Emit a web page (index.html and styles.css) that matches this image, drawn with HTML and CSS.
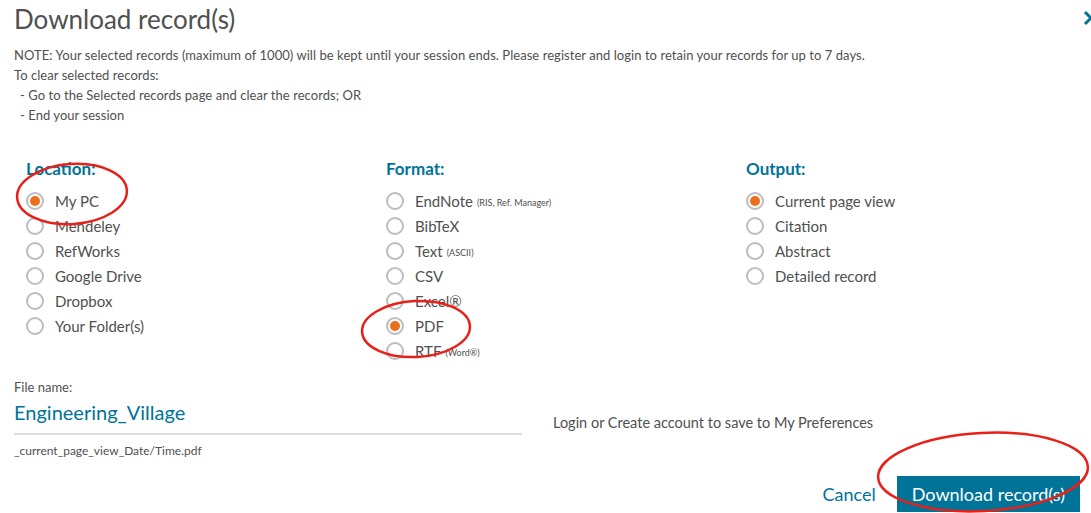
FILE: index.html
```html
<!DOCTYPE html>
<html lang="en">
<head>
    <meta charset="UTF-8">
    <title>Download record(s)</title>
    <link rel="stylesheet" href="styles.css">
</head>
<body>
    <div class="dialog">
        <div class="dialog-header">
            <h1>Download record(s)</h1>
            <button class="close" aria-label="Close">
                <svg width="12" height="16" viewBox="0 0 12 16"><polyline points="2,2 8,8 2,14" fill="none" stroke="#007398" stroke-width="3"/></svg>
            </button>
        </div>
        <div class="note">
            <p>NOTE: Your selected records (maximum of 1000) will be kept until your session ends. Please register and login to retain your records for up to 7 days.</p>
            <p>To clear selected records:</p>
            <p class="indent">- Go to the Selected records page and clear the records; OR</p>
            <p class="indent">- End your session</p>
        </div>

        <div class="options">
            <div class="option-group">
                <h2>Location:</h2>
                <label class="radio checked"><span class="dot"></span>My PC</label>
                <label class="radio"><span class="dot"></span>Mendeley</label>
                <label class="radio"><span class="dot"></span>RefWorks</label>
                <label class="radio"><span class="dot"></span>Google Drive</label>
                <label class="radio"><span class="dot"></span>Dropbox</label>
                <label class="radio"><span class="dot"></span>Your Folder(s)</label>
            </div>
            <div class="option-group">
                <h2>Format:</h2>
                <label class="radio"><span class="dot"></span>EndNote <small>(RIS, Ref. Manager)</small></label>
                <label class="radio"><span class="dot"></span>BibTeX</label>
                <label class="radio"><span class="dot"></span>Text <small>(ASCII)</small></label>
                <label class="radio"><span class="dot"></span>CSV</label>
                <label class="radio"><span class="dot"></span>Excel®</label>
                <label class="radio checked"><span class="dot"></span>PDF</label>
                <label class="radio"><span class="dot"></span>RTF <small>(Word®)</small></label>
            </div>
            <div class="option-group">
                <h2>Output:</h2>
                <label class="radio checked"><span class="dot"></span>Current page view</label>
                <label class="radio"><span class="dot"></span>Citation</label>
                <label class="radio"><span class="dot"></span>Abstract</label>
                <label class="radio"><span class="dot"></span>Detailed record</label>
            </div>
        </div>

        <div class="file-row">
            <div class="file-name">
                <div class="file-label">File name:</div>
                <div class="file-input">Engineering_Village</div>
                <div class="file-suffix">_current_page_view_Date/Time.pdf</div>
            </div>
            <div class="prefs">Login or Create account to save to My Preferences</div>
        </div>

        <div class="actions">
            <a class="cancel" href="#">Cancel</a>
            <button class="download">Download record(s)</button>
        </div>
    </div>

    <svg class="marks" width="1091" height="513" viewBox="0 0 1091 513">
        <ellipse cx="72" cy="194" rx="55" ry="30" transform="rotate(-4 72 194)"/>
        <ellipse cx="416" cy="329" rx="54" ry="28" transform="rotate(-3 416 329)"/>
        <ellipse cx="983" cy="472" rx="105" ry="39" transform="rotate(-3 983 472)"/>
    </svg>
</body>
</html>
```

FILE: styles.css
```css
body {
    margin: 0;
    font-family: Lato, "Open Sans", sans-serif;
    color: #505050;
    background-color: #fff;
    position: relative;
    width: 1091px;
    height: 513px;
    overflow: hidden;
}
.dialog {
    padding: 0 0 0 14px;
}
.dialog-header {
    display: flex;
    justify-content: space-between;
    align-items: center;
    height: 38px;
}
h1 {
    margin: 0;
    font-size: 26px;
    font-weight: 400;
    color: #505050;
}
.close {
    border: none;
    background: none;
    padding: 0;
    margin-right: -4px;
    cursor: pointer;
}
.note {
    margin-top: 7px;
    font-size: 13px;
    line-height: 20px;
    letter-spacing: 0.05px;
}
.note p {
    margin: 0;
}
.note .indent {
    padding-left: 6px;
}
.options {
    display: grid;
    grid-template-columns: 360px 360px 1fr;
    padding-left: 12px;
    margin-top: 32px;
}
h2 {
    margin: 0 0 7px;
    font-size: 17px;
    font-weight: 700;
    color: #007398;
    line-height: 24px;
}
.radio {
    display: flex;
    align-items: center;
    height: 25px;
    font-size: 15px;
    gap: 11px;
}
.radio small {
    font-size: 9px;
    margin-left: -7px;
    align-self: center;
    padding-top: 3px;
}
.dot {
    width: 18px;
    height: 18px;
    box-sizing: border-box;
    border: 2px solid #bdbdbd;
    border-radius: 50%;
    display: flex;
    align-items: center;
    justify-content: center;
}
.radio.checked .dot::after {
    content: "";
    width: 10px;
    height: 10px;
    border-radius: 50%;
    background-color: #e9711c;
}
.file-row {
    display: flex;
    align-items: flex-start;
    margin-top: 15px;
}
.file-name {
    width: 508px;
}
.file-label {
    font-size: 13px;
    line-height: 18px;
}
.file-input {
    font-size: 20px;
    color: #007398;
    line-height: 26px;
    margin-top: 3px;
    padding-bottom: 8px;
    border-bottom: 2px solid #dcdcdc;
}
.file-suffix {
    font-size: 12px;
    line-height: 16px;
    margin-top: 8px;
}
.prefs {
    margin-left: 31px;
    margin-top: 36px;
    font-size: 14.5px;
}
.actions {
    display: flex;
    justify-content: flex-end;
    align-items: center;
    gap: 21px;
    margin-top: 17px;
    padding-right: 11px;
}
.cancel {
    font-size: 18px;
    color: #007398;
    text-decoration: none;
}
.download {
    border: none;
    background-color: #007398;
    color: #fff;
    font-family: inherit;
    font-size: 18px;
    height: 36px;
    padding: 0 15px;
}
.marks {
    position: absolute;
    left: 0;
    top: 0;
    pointer-events: none;
}
.marks ellipse {
    fill: none;
    stroke: #e8201a;
    stroke-width: 2.5;
}
```
